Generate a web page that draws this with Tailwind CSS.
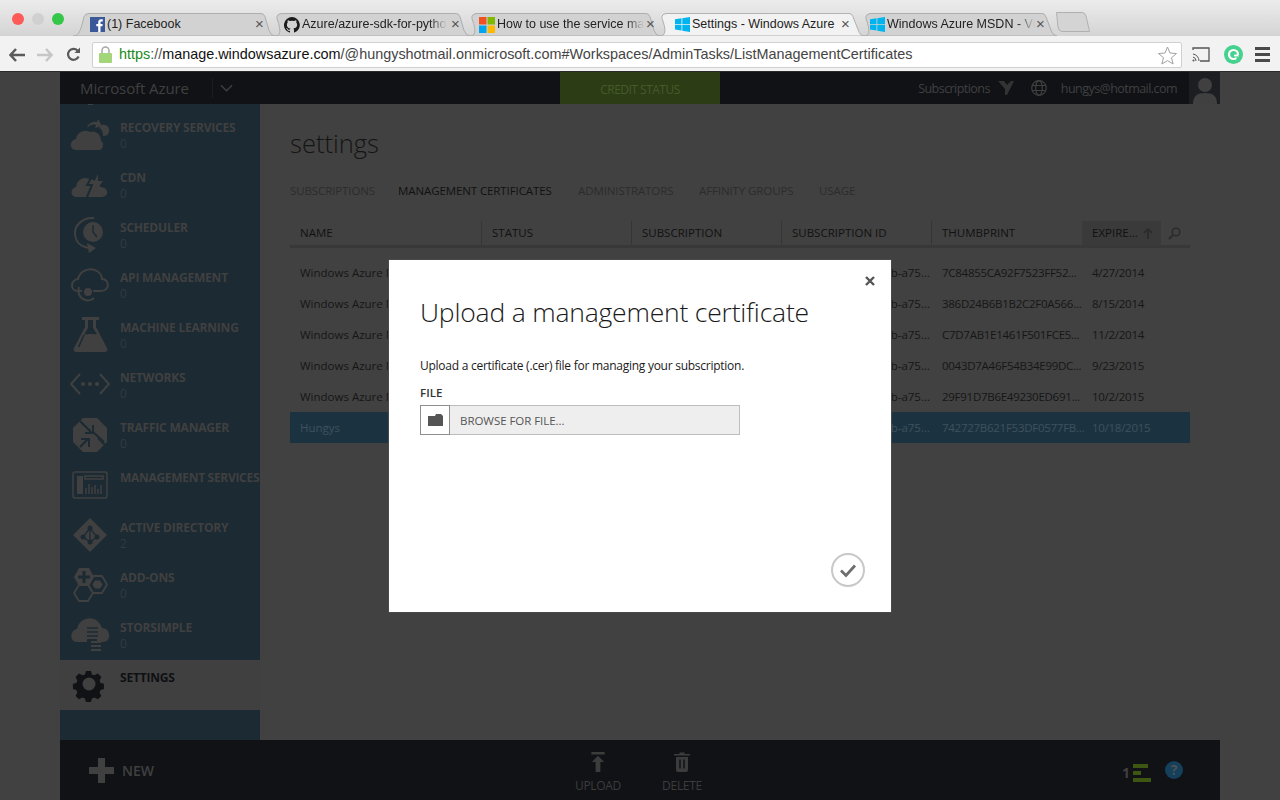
<!DOCTYPE html>
<html lang="en">
<head>
  <meta charset="UTF-8">
  <title>Settings - Windows Azure</title>
  <script src="https://cdn.jsdelivr.net/npm/@tailwindcss/browser@4"></script>
</head>
<body class="w-[1280px] h-[800px] overflow-hidden relative font-['Open_Sans',sans-serif] bg-white">

  <!-- browser chrome -->
  <div class="h-[72px] flex flex-col font-['Liberation_Sans',sans-serif] border-b border-[#2a2a2a]">
    <div class="h-[36px] bg-gradient-to-b from-[#ececec] to-[#d4d4d4] flex items-end relative">
      <div class="absolute left-[12px] top-[13px] flex gap-[8px]">
        <span class="w-3 h-3 rounded-full bg-[#fc5b57]"></span>
        <span class="w-3 h-3 rounded-full bg-[#d0d0d0]"></span>
        <span class="w-3 h-3 rounded-full bg-[#34c749]"></span>
      </div>
      <div class="flex items-end pl-[73px] text-[12.5px] text-[#222] h-[23px]">
        <div class="relative w-[202px] h-full flex items-center pl-[17px]">
          <svg class="absolute inset-0 w-full h-full" viewBox="0 0 202 24" preserveAspectRatio="none"><path d="M0 24C5 24 7 20 9 12L11 4Q12 .5 16 .5H188Q191 .5 192 4L196 18Q198 24 202 24Z" fill="#d2d2d2" stroke="#acacac"/></svg>
          <svg class="relative w-[15px] h-[15px] mr-[2px]" viewBox="0 0 15 15"><rect width="15" height="15" fill="#3b5998"/><path d="M10.5 15V9.2h1.9l.3-2.3h-2.2V5.500c0-.7.2-1.100 1.100-1.100h1.200V2.300c-.5 0-1-.1-1.700-.1-1.700 0-2.900 1-2.900 3v1.700H6.300v2.300h1.900V15z" fill="#fff"/></svg>
          <span class="relative">(1) Facebook</span>
          <span class="absolute left-[182px] top-[3px] text-[15px] leading-[16px] text-[#555]">×</span>
        </div>
        <div class="relative w-[195px] h-full flex items-center pl-[9px]">
          <svg class="absolute inset-0 w-full h-full" viewBox="0 0 195 24" preserveAspectRatio="none"><path d="M0 24C5 24 7 20 2 6Q1 .5 8 .5H181Q184 .5 185 4L189 18Q191 24 195 24Z" fill="#d2d2d2" stroke="#acacac"/></svg>
          <svg class="relative w-[16px] h-[16px] mr-[2px]" viewBox="0 0 16 16"><path fill="#1b1b1b" d="M8 0a8 8 0 0 0-2.500 15.600c.4.100.5-.2.500-.4v-1.400c-2.200.5-2.700-1-2.700-1-.4-.9-.9-1.200-.9-1.200-.7-.5.100-.5.100-.5.800.1 1.200.8 1.200.8.700 1.200 1.900.9 2.300.7.100-.5.300-.9.500-1.100-1.800-.2-3.600-.9-3.600-4 0-.9.300-1.600.8-2.100-.1-.2-.4-1 .1-2.100 0 0 .7-.2 2.200.8a7.600 7.600 0 0 1 4 0c1.500-1 2.200-.8 2.200-.8.400 1.100.2 1.900.1 2.100.5.600.8 1.300.8 2.100 0 3.100-1.900 3.700-3.700 3.900.3.300.6.800.6 1.500v2.200c0 .2.100.5.600.4A8 8 0 0 0 8 0z"/></svg>
          <span class="relative whitespace-nowrap [mask-image:linear-gradient(to_right,black_88%,transparent)]">Azure/azure-sdk-for-pytho</span>
          <span class="absolute left-[176px] top-[3px] text-[15px] leading-[16px] text-[#555]">×</span>
        </div>
        <div class="relative w-[190px] h-full flex items-center pl-[9px]">
          <svg class="absolute inset-0 w-full h-full" viewBox="0 0 190 24" preserveAspectRatio="none"><path d="M0 24C5 24 7 20 2 6Q1 .5 8 .5H176Q179 .5 180 4L184 18Q186 24 190 24Z" fill="#d2d2d2" stroke="#acacac"/></svg>
          <svg class="relative w-[16px] h-[16px] mr-[2px]" viewBox="0 0 16 16"><rect width="7.500" height="7.500" fill="#f25022"/><rect x="8.500" width="7.500" height="7.500" fill="#7fba00"/><rect y="8.500" width="7.500" height="7.500" fill="#00a4ef"/><rect x="8.500" y="8.500" width="7.500" height="7.500" fill="#ffb900"/></svg>
          <span class="relative whitespace-nowrap [mask-image:linear-gradient(to_right,black_88%,transparent)]">How to use the service ma</span>
          <span class="absolute left-[176px] top-[3px] text-[15px] leading-[16px] text-[#555]">×</span>
        </div>
        <div class="relative w-[204px] h-full flex items-center pl-[15px] z-10">
          <svg class="absolute inset-0 w-full h-full" viewBox="0 0 204 25" preserveAspectRatio="none"><path d="M0 25C5 25 7 20 2 6Q1 .5 8 .5H189Q192 .5 193 4L198 18Q200 25 204 25Z" fill="#f2f2f2" stroke="#acacac"/></svg>
          <svg class="relative w-[15px] h-[15px] mr-[2px]" viewBox="0 0 15 15"><path fill="#00b4f0" d="M0 2.300 6.500 1.300V7H0zM7.300 1.200 15 0v7H7.300zM0 7.800h6.500v5.800L0 12.600zM7.300 7.800H15V15l-7.700-1.200z"/></svg>
          <span class="relative">Settings - Windows Azure</span>
          <span class="absolute left-[181px] top-[3px] text-[15px] leading-[16px] text-[#555]">×</span>
        </div>
        <div class="relative w-[193px] h-full flex items-center pl-[6px]">
          <svg class="absolute inset-0 w-full h-full" viewBox="0 0 193 24" preserveAspectRatio="none"><path d="M0 24C5 24 7 20 2 6Q1 .5 8 .5H178Q181 .5 182 4L187 18Q189 24 193 24Z" fill="#d2d2d2" stroke="#acacac"/></svg>
          <svg class="relative w-[15px] h-[15px] mr-[2px]" viewBox="0 0 15 15"><path fill="#00b4f0" d="M0 2.300 6.500 1.300V7H0zM7.300 1.200 15 0v7H7.300zM0 7.800h6.500v5.800L0 12.600zM7.300 7.800H15V15l-7.700-1.200z"/></svg>
          <span class="relative whitespace-nowrap [mask-image:linear-gradient(to_right,black_88%,transparent)]">Windows Azure MSDN - Vi</span>
          <span class="absolute left-[172px] top-[3px] text-[15px] leading-[16px] text-[#555]">×</span>
        </div>
        <svg class="w-[34px] h-[20px] -ml-[1px] mb-[4px]" viewBox="0 0 34 20"><path d="M.5.500H26Q29 .5 30 4L33.500 19.500H6Q3 19.500 2 15Z" fill="#d4d4d4" stroke="#b0b0b0"/></svg>
      </div>
    </div>
    <div class="h-[35px] bg-[#f2f2f2] flex items-center pt-[2px]">
      <div class="w-[92px] flex items-center pl-[9px] shrink-0">
        <svg class="w-[16px] h-[14px]" viewBox="0 0 16 14"><path d="M7 1 1.500 7 7 13M2 7h14" fill="none" stroke="#5a5a5a" stroke-width="2.500"/></svg>
        <svg class="w-[16px] h-[14px] ml-[12px]" viewBox="0 0 16 14"><path d="M9 1l5.500 6L9 13M14 7H0" fill="none" stroke="#c6c6c6" stroke-width="2.500"/></svg>
        <svg class="w-[15px] h-[15px] ml-[13px]" viewBox="0 0 15 15"><path d="M12.600 9.500A5.500 5.500 0 1 1 11.500 3.500" fill="none" stroke="#5a5a5a" stroke-width="2.200"/><path d="M8.500 6H14V.5z" fill="#5a5a5a"/></svg>
      </div>
      <div class="w-[1090px] h-[26px] bg-white border border-[#d0d0d0] rounded-[2px] flex items-center relative text-[14.4px] whitespace-nowrap">
        <svg class="ml-[6px] w-[13px] h-[17px] mr-[7px]" viewBox="0 0 13 17"><path d="M3 7V4.500a3.500 3.500 0 0 1 7 0V7" fill="none" stroke="#a8a8a8" stroke-width="1.500"/><rect y="7" width="13" height="10" rx="1" fill="#a3d67a"/></svg>
        <span><span class="text-[#1a8a1a]">https</span><span class="text-[#555]">://</span><span class="text-[#111]">manage.windowsazure.com</span><span class="text-[#444]">/@hungyshotmail.onmicrosoft.com#Workspaces/AdminTasks/ListManagementCertificates</span></span>
        <svg class="absolute right-[4px] top-[3px] w-[19px] h-[19px]" viewBox="0 0 19 19"><path d="M9.500 1l2.500 6 6.500.5-5 4.200 1.600 6.300-5.600-3.400L3.900 18l1.600-6.300-5-4.200L7 7z" fill="#fff" stroke="#a0a0a0"/></svg>
      </div>
      <svg class="ml-[10px] w-[18px] h-[15px]" viewBox="0 0 18 15"><path d="M1 3V1h16v13H8" fill="none" stroke="#555" stroke-width="1.300"/><path d="M1 7a7 7 0 0 1 6 7M1 10a4 4 0 0 1 3 4" fill="none" stroke="#555"/><circle cx="1.500" cy="13.500" r="1" fill="#555"/></svg>
      <svg class="ml-[14px] w-[19px] h-[19px]" viewBox="0 0 19 19"><circle cx="9.500" cy="9.500" r="9.500" fill="#46d18e"/><circle cx="9.500" cy="9.500" r="4.500" fill="none" stroke="#fff" stroke-width="2.200"/><path d="M9.500 11h4v3" fill="none" stroke="#46d18e" stroke-width="2"/><path d="M10 10.500h4" stroke="#fff" stroke-width="1.800"/></svg>
      <div class="ml-[12px] flex flex-col gap-[3px]">
        <span class="w-[15px] h-[3px] bg-[#4a4a4a]"></span><span class="w-[15px] h-[3px] bg-[#4a4a4a]"></span><span class="w-[15px] h-[3px] bg-[#4a4a4a]"></span>
      </div>
    </div>
  </div>

  <!-- azure portal, dimmed behind the dialog -->
  <div class="h-[728px] bg-[#414141] flex justify-center relative text-[#404040]">
    <div class="w-[1160px] h-full flex flex-col">
      <header class="h-[32px] bg-[#101216] flex items-center shrink-0">
        <div class="w-[500px] flex items-center shrink-0">
          <span class="pl-[20px] text-[15px] w-[152px] tracking-[-0.1px]">Microsoft Azure</span>
          <span class="h-[20px] border-l border-[#1c1e22]"></span>
          <svg class="ml-[7px] w-[13px] h-[8px]" viewBox="0 0 14 8"><path d="M1 1l6 6 6-6" fill="none" stroke="#404040" stroke-width="1.500"/></svg>
        </div>
        <div class="w-[160px] h-full bg-[#2c3c14] flex items-center justify-center text-[12px] tracking-[-0.5px] text-[#465a2a] pt-[3px] shrink-0">CREDIT STATUS</div>
        <div class="flex-1 flex items-center justify-end h-full text-[12.5px] tracking-[-0.55px]">
          <span class="pt-[2px]">Subscriptions</span>
          <svg class="ml-[8px] w-[16px] h-[14px]" viewBox="0 0 16 14"><path d="M0 0h6l3 4 4-4h3L9 14H7V8z" fill="#333"/></svg>
          <svg class="ml-[17px] w-[16px] h-[16px]" viewBox="0 0 16 16"><g fill="none" stroke="#404040" stroke-width="1.200"><circle cx="8" cy="8" r="7.300"/><ellipse cx="8" cy="8" rx="3.300" ry="7.300"/><path d="M1 5.500h14M1 10.500h14"/></g></svg>
          <span class="ml-[14px] pt-[2px]">hungys@hotmail.com</span>
          <div class="ml-[12px] w-[31px] h-full bg-[#1c1e22] flex items-end justify-center">
            <svg class="w-[24px] h-[28px]" viewBox="0 0 24 28"><circle cx="12" cy="9" r="7" fill="#404040"/><path d="M0 28c0-8 4-11 12-11s12 3 12 11z" fill="#404040"/></svg>
          </div>
        </div>
      </header>

      <div class="flex-1 flex min-h-0">
        <nav class="w-[200px] bg-[#1c2a33] flex flex-col shrink-0 text-[#404040] text-[12px] font-bold tracking-[-0.2px]">
          <div class="h-[6px]"><div class="ml-[28px] w-[5px] h-[1px] bg-[#404040]"></div></div>
          <div class="h-[50px] flex">
            <svg class="w-[60px] h-[50px] shrink-0" viewBox="0 0 60 50"><path d="M16 40c-7 0-7-10 0-11 1-7 9-10 14-7 5-2 11 2 11 9 3 1 3 9-2 9z" fill="#404040"/><path d="M27 17c2-4 6-6 10-5l1-3 4 7-7 2 1-3c-3-1-6 0-8 2zM42 15c5-1 8 3 7 7-1 3-3 4-6 4 0-4-1-7-4-8z" fill="#404040"/></svg>
            <div class="pt-[10px]"><div class="leading-[16px]">RECOVERY SERVICES</div><div class="leading-[16px] font-normal text-[#2f3b42]">0</div></div>
          </div>
          <div class="h-[50px] flex">
            <svg class="w-[60px] h-[50px] shrink-0" viewBox="0 0 60 50"><path d="M16 37c-6 0-6-9 0-10 1-7 7-11 13-8 1 0 5 0 8 4 2 1 3 2 3 4 9 0 10 10 1 10z" fill="#404040"/><path d="M34 13l-7 12h5l-5 12" fill="none" stroke="#1c2a33" stroke-width="2"/><path d="M38 14l-5 10h4l-6 13 12-16h-5z" fill="#404040"/></svg>
            <div class="pt-[10px]"><div class="leading-[16px]">CDN</div><div class="leading-[16px] font-normal text-[#2f3b42]">0</div></div>
          </div>
          <div class="h-[50px] flex">
            <svg class="w-[60px] h-[50px] shrink-0" viewBox="0 0 60 50"><circle cx="33" cy="22" r="10" fill="#404040"/><path d="M33 15v7l4 5" fill="none" stroke="#1c2a33" stroke-width="1.500"/><path d="M34 8C23 7 15 15 15 23c0 9 6 14 15 15" fill="none" stroke="#404040" stroke-width="2"/><path d="M27 33l9 5-7 5z" fill="#404040"/></svg>
            <div class="pt-[10px]"><div class="leading-[16px]">SCHEDULER</div><div class="leading-[16px] font-normal text-[#2f3b42]">0</div></div>
          </div>
          <div class="h-[50px] flex">
            <svg class="w-[60px] h-[50px] shrink-0" viewBox="0 0 60 50"><path d="M22 31h-4c-8 0-8-11 0-12 2-9 13-12 19-8 3 2 5 5 5 8 8 0 8 12-1 12H33" fill="none" stroke="#404040" stroke-width="2"/><circle cx="28" cy="32" r="4" fill="#404040"/><path d="M19 27a10 10 0 0 0 6 13c3 1 7 0 9-2" fill="none" stroke="#404040" stroke-width="2"/></svg>
            <div class="pt-[10px]"><div class="leading-[16px]">API MANAGEMENT</div><div class="leading-[16px] font-normal text-[#2f3b42]">0</div></div>
          </div>
          <div class="h-[50px] flex">
            <svg class="w-[60px] h-[50px] shrink-0" viewBox="0 0 60 50"><path d="M22 7h17v3h-3v7l11 21c1 2 0 4-2 4H16c-2 0-3-2-2-4l11-21v-7h-3z" fill="#404040"/><path d="M28 10v8l-4 7c5-2 9 0 13-1l-4-6v-8z" fill="#1c2a33"/><path d="M24 25l-5 11h1" fill="none" stroke="#1c2a33" stroke-width="1.500"/></svg>
            <div class="pt-[10px]"><div class="leading-[16px]">MACHINE LEARNING</div><div class="leading-[16px] font-normal text-[#2f3b42]">0</div></div>
          </div>
          <div class="h-[50px] flex">
            <svg class="w-[60px] h-[50px] shrink-0" viewBox="0 0 60 50"><path d="M20 14l-9 10 9 10M40 14l9 10-9 10" fill="none" stroke="#404040" stroke-width="2"/><circle cx="23" cy="24" r="2" fill="#404040"/><circle cx="30" cy="24" r="2" fill="#404040"/><circle cx="37" cy="24" r="2" fill="#404040"/></svg>
            <div class="pt-[10px]"><div class="leading-[16px]">NETWORKS</div><div class="leading-[16px] font-normal text-[#2f3b42]">0</div></div>
          </div>
          <div class="h-[50px] flex">
            <svg class="w-[60px] h-[50px] shrink-0" viewBox="0 0 60 50"><path d="M23 8h14l10 10v14L37 42H23L13 32V18z" fill="#404040"/><g fill="none" stroke="#1c2a33" stroke-width="2"><path d="M20 11l11 11M33 15v8h-8M44 32L33 22M20 37l8-8M21 29h8v8M38 28l8 8"/></g></svg>
            <div class="pt-[10px]"><div class="leading-[16px]">TRAFFIC MANAGER</div><div class="leading-[16px] font-normal text-[#2f3b42]">0</div></div>
          </div>
          <div class="h-[50px] flex">
            <svg class="w-[60px] h-[50px] shrink-0" viewBox="0 0 60 50"><rect x="13" y="12" width="34" height="26" rx="2" fill="none" stroke="#404040" stroke-width="1.500"/><rect x="17" y="16" width="6" height="18" fill="#404040"/><path d="M25 16h18v3H25zM26 34v-6M29 34v-10M32 34v-7M35 34v-9M38 34v-5M41 34v-9" stroke="#404040" fill="none" stroke-width="1.500"/></svg>
            <div class="pt-[10px]"><div class="leading-[16px] whitespace-nowrap tracking-[-0.3px]">MANAGEMENT SERVICES</div></div>
          </div>
          <div class="h-[50px] flex">
            <svg class="w-[60px] h-[50px] shrink-0" viewBox="0 0 60 50"><path d="M30 8l17 17-17 17-17-17z" fill="#404040"/><g fill="none" stroke="#1c2a33" stroke-width="1.300"><path d="M30 18l-7 9 7 5 7-5zM30 18v14"/></g><circle cx="30" cy="18" r="2.500" fill="#1c2a33"/><circle cx="23" cy="27" r="2.500" fill="#1c2a33"/><circle cx="37" cy="27" r="2.500" fill="#1c2a33"/><circle cx="30" cy="32" r="2.500" fill="#1c2a33"/></svg>
            <div class="pt-[10px]"><div class="leading-[16px]">ACTIVE DIRECTORY</div><div class="leading-[16px] font-normal text-[#2f3b42]">2</div></div>
          </div>
          <div class="h-[50px] flex">
            <svg class="w-[60px] h-[50px] shrink-0" viewBox="0 0 60 50"><path d="M19 8h10l5 9-5 9H19l-5-9z" fill="#404040"/><path d="M24 11v12M18 17h12" stroke="#1c2a33" stroke-width="3"/><path d="M33 16h9l5 8.500-5 8.500h-9l-5-8.500zM19 25h9l5 8-5 8h-9l-5-8z" fill="none" stroke="#404040" stroke-width="1.800"/><path d="M35 20.500h5l2.500 4-2.500 4h-5l-2.500-4z" fill="#404040"/></svg>
            <div class="pt-[10px]"><div class="leading-[16px]">ADD-ONS</div><div class="leading-[16px] font-normal text-[#2f3b42]">0</div></div>
          </div>
          <div class="h-[50px] flex">
            <svg class="w-[60px] h-[50px] shrink-0" viewBox="0 0 60 50"><path d="M17 32c-8 0-7-12 0-13 3-13 20-15 25-1 9 0 10 14 1 14h-6v-3H27v3z" fill="#404040"/><path d="M27 18h11M27 22h11M27 26h11" stroke="#1c2a33" stroke-width="1.500"/><path d="M31 32h10M31 36h10M31 40h10" stroke="#404040" stroke-width="1.800"/></svg>
            <div class="pt-[10px]"><div class="leading-[16px]">STORSIMPLE</div><div class="leading-[16px] font-normal text-[#2f3b42]">0</div></div>
          </div>
          <div class="h-[50px] flex bg-[#404040] text-[#0e1014]">
            <svg class="w-[60px] h-[50px] shrink-0" viewBox="0 0 60 50"><path d="M26 11h6l1 4 3 1 4-2 4 4-2 4 1 3 4 1v6l-4 1-1 3 2 4-4 4-4-2-3 1-1 4h-6l-1-4-3-1-4 2-4-4 2-4-1-3-4-1v-6l4-1 1-3-2-4 4-4 4 2 3-1z" transform="translate(3.500 1.500) scale(.86)" fill="#101216"/><circle cx="29" cy="24" r="6.500" fill="#404040"/></svg>
            <div class="pt-[10px]"><div class="leading-[16px]">SETTINGS</div></div>
          </div>
        </nav>

        <main class="flex-1 pl-[30px] pr-[30px] text-[#141414]">
          <h1 class="text-[25.5px] font-light leading-[40px] mt-[19px] h-[40px]">settings</h1>
          <div class="flex text-[11.5px] tracking-[-0.1px] text-[#2c2c2c] mt-[16px] h-[24px] items-center whitespace-nowrap">
            <span class="w-[108px]">SUBSCRIPTIONS</span>
            <span class="w-[180px] text-[#111]">MANAGEMENT CERTIFICATES</span>
            <span class="w-[121px]">ADMINISTRATORS</span>
            <span class="w-[120px]">AFFINITY GROUPS</span>
            <span>USAGE</span>
          </div>

          <div class="w-[900px] mt-[18px] text-[11.5px]">
            <div class="flex h-[27px] border-b-[3px] border-[#383838] text-[#111] font-medium items-center whitespace-nowrap">
              <span class="w-[192px] pl-[10px] h-full flex items-center border-r border-[#363636]">NAME</span>
              <span class="w-[150px] pl-[10px] h-full flex items-center border-r border-[#363636]">STATUS</span>
              <span class="w-[150px] pl-[10px] h-full flex items-center border-r border-[#363636]">SUBSCRIPTION</span>
              <span class="w-[150px] pl-[10px] h-full flex items-center border-r border-[#363636]">SUBSCRIPTION ID</span>
              <span class="w-[150px] pl-[10px] h-full flex items-center">THUMBPRINT</span>
              <span class="w-[79px] pl-[10px] h-full flex items-center bg-[#3a3a3a] gap-[5px]">EXPIRE...
                <svg class="w-[10px] h-[11px]" viewBox="0 0 10 11"><path d="M5 1L1 5M5 1l4 4M5 1v10" fill="none" stroke="#2c2c2c" stroke-width="1.800"/></svg>
              </span>
              <svg class="ml-[7px] w-[13px] h-[13px]" viewBox="0 0 13 13"><circle cx="8" cy="5" r="3.800" fill="none" stroke="#2c2c2c" stroke-width="1.600"/><path d="M5 8l-4 4" stroke="#2c2c2c" stroke-width="2"/></svg>
            </div>
            <div class="pt-[9px] text-[#161616] whitespace-nowrap">
              <div class="flex h-[31px] items-center"><span class="w-[492px] pl-[10px]">Windows Azure M</span><span class="w-[148px] text-right">b-a75...</span><span class="w-[152px] pl-[12px] tracking-[-0.27px]">7C84855CA92F7523FF52...</span><span class="pl-[10px] tracking-[-0.27px]">4/27/2014</span></div>
              <div class="flex h-[31px] items-center"><span class="w-[492px] pl-[10px]">Windows Azure M</span><span class="w-[148px] text-right">b-a75...</span><span class="w-[152px] pl-[12px] tracking-[-0.27px]">386D24B6B1B2C2F0A566...</span><span class="pl-[10px] tracking-[-0.27px]">8/15/2014</span></div>
              <div class="flex h-[31px] items-center"><span class="w-[492px] pl-[10px]">Windows Azure M</span><span class="w-[148px] text-right">b-a75...</span><span class="w-[152px] pl-[12px] tracking-[-0.27px]">C7D7AB1E1461F501FCE5...</span><span class="pl-[10px] tracking-[-0.27px]">11/2/2014</span></div>
              <div class="flex h-[31px] items-center"><span class="w-[492px] pl-[10px]">Windows Azure M</span><span class="w-[148px] text-right">b-a75...</span><span class="w-[152px] pl-[12px] tracking-[-0.27px]">0043D7A46F54B34E99DC...</span><span class="pl-[10px] tracking-[-0.27px]">9/23/2015</span></div>
              <div class="flex h-[31px] items-center"><span class="w-[492px] pl-[10px]">Windows Azure M</span><span class="w-[148px] text-right">b-a75...</span><span class="w-[152px] pl-[12px] tracking-[-0.27px]">29F91D7B6E49230ED691...</span><span class="pl-[10px] tracking-[-0.27px]">10/2/2015</span></div>
              <div class="flex h-[31px] items-center bg-[#1b3341] text-[#3f515c]"><span class="w-[492px] pl-[10px]">Hungys</span><span class="w-[148px] text-right">b-a75...</span><span class="w-[152px] pl-[12px] tracking-[-0.27px]">742727B621F53DF0577FB...</span><span class="pl-[10px] tracking-[-0.27px]">10/18/2015</span></div>
            </div>
          </div>
        </main>
      </div>

      <footer class="h-[60px] bg-[#101216] flex shrink-0 relative text-[#3c3c3c]">
        <div class="w-[500px] flex items-center pl-[29px] h-[60px]">
          <svg class="w-[25px] h-[25px]" viewBox="0 0 25 25"><path d="M9 0h7v9h9v7h-9v9H9v-9H0V9h9z" fill="#404040"/></svg>
          <span class="ml-[8px] text-[14px] font-semibold text-[#404040]">NEW</span>
        </div>
        <div class="flex items-start text-[12px] tracking-[-0.3px] pt-[12px]">
          <div class="w-[76px] flex flex-col items-center">
            <svg class="w-[14px] h-[20px]" viewBox="0 0 14 21"><path d="M0 0h14v2.500H0zM7 4l6.500 6.500h-4V21h-5V10.500h-4z" fill="#3c3c3c"/></svg>
            <span class="leading-[16px] mt-[6px]">UPLOAD</span>
          </div>
          <div class="w-[38px] ml-[27px] flex flex-col items-center">
            <svg class="w-[16px] h-[20px]" viewBox="0 0 16 20"><path d="M0 2h5.500V.5h5V2H16v1.500H0zM2 5h12v13q0 2-2 2H4q-2 0-2-2z" fill="#3c3c3c"/><path d="M6 7.500v9M10 7.500v9" stroke="#101216" stroke-width="1.500"/></svg>
            <span class="leading-[16px] mt-[6px]">DELETE</span>
          </div>
        </div>
        <div class="absolute left-[1062px] top-[23px] flex items-center">
          <span class="text-[14px] font-bold text-[#404040] w-[11px] leading-[20px]">1</span>
          <div class="flex flex-col gap-[3px]">
            <span class="block w-[15px] h-[4px] bg-[#3d5712]"></span>
            <span class="block w-[8px] h-[4px] bg-[#3d5712]"></span>
            <span class="block w-[18px] h-[4px] bg-[#3d5712]"></span>
          </div>
        </div>
        <div class="absolute left-[1105px] top-[21px] w-[18px] h-[18px] rounded-full bg-[#14405c] text-[#505050] flex items-center justify-center text-[14px] font-bold leading-none">?</div>
      </footer>
    </div>

    <!-- dialog -->
    <div class="absolute left-[389px] top-[188px] w-[502px] h-[352px] bg-white text-[#1a1a1a] pl-[31px] shadow-[0_0_0_1px_#4a4a4a]">
      <svg class="absolute right-[16px] top-[16px] w-[10px] h-[10px]" viewBox="0 0 10 10"><path d="M1 1l8 8M9 1l-8 8" stroke="#555" stroke-width="2.400"/></svg>
      <h2 class="text-[26.5px] tracking-[-0.2px] font-light leading-[40px] mt-[32px] h-[40px] whitespace-nowrap">Upload a management certificate</h2>
      <p class="text-[12px] tracking-[-0.26px] leading-[18px] mt-[25px]">Upload a certificate (.cer) file for managing your subscription.</p>
      <div class="text-[11.5px] font-semibold leading-[16px] mt-[10px] text-[#333]">FILE</div>
      <div class="flex w-[320px] h-[30px] mt-[4px]">
        <div class="w-[30px] h-full border border-[#8e8e8e] flex items-center justify-center">
          <svg class="w-[15px] h-[12px]" viewBox="0 0 15 12"><path d="M0 2h7l1-2h5l2 2v10H0z" fill="#555"/></svg>
        </div>
        <div class="flex-1 bg-[#eeeeee] border border-l-0 border-[#bdbdbd] flex items-center pl-[10px] pt-[1px] text-[11.5px] tracking-[-0.05px] text-[#555]">BROWSE FOR FILE...</div>
      </div>
      <svg class="absolute left-[441px] top-[292px] w-[36px] h-[36px]" viewBox="0 0 36 36"><circle cx="18" cy="18" r="16" fill="none" stroke="#c8c8c8" stroke-width="2"/><path d="M11 18.500l5 5 9-10" fill="none" stroke="#6e6e6e" stroke-width="2.800"/></svg>
    </div>
  </div>
</body>
</html>
